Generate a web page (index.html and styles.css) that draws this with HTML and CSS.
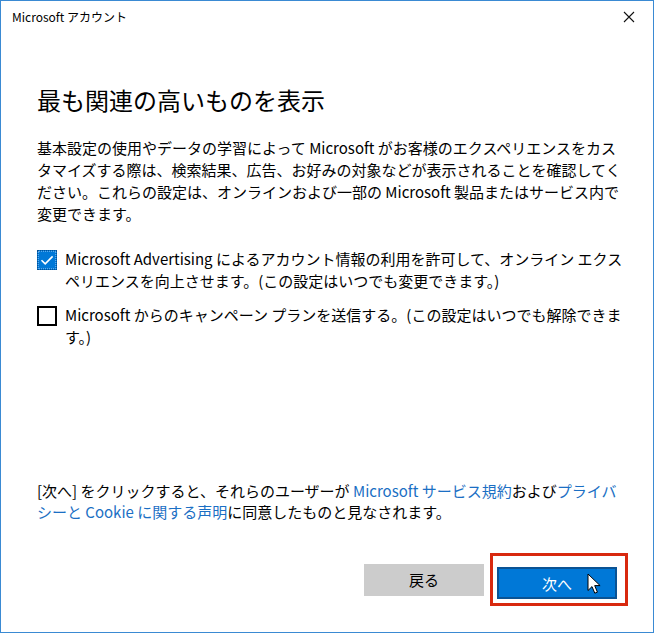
FILE: index.html
```html
<!DOCTYPE html>
<html lang="ja">
<head>
<meta charset="utf-8">
<link rel="stylesheet" href="styles.css">
</head>
<body>
<div class="window">
  <div class="titlebar">
    <span class="title">Microsoft アカウント</span>
    <svg class="close" width="12" height="12" viewBox="0 0 12 12"><path d="M1 1L11 11M11 1L1 11" stroke="#111" stroke-width="1.1" fill="none"/></svg>
  </div>
  <div class="content">
    <h1 class="heading">最も関連の高いものを表示</h1>
    <p class="intro">基本設定の使用やデータの学習によって Microsoft がお客様のエクスペリエンスをカス<br>タマイズする際は、検索結果、広告、お好みの対象などが表示されることを確認してく<br>ださい。これらの設定は、オンラインおよび一部の Microsoft 製品またはサービス内で<br>変更できます。</p>
    <div class="option">
      <span class="box checked"><svg width="20" height="20" viewBox="0 0 20 20"><path d="M4.5 10.2L8.2 13.8L15.6 6.4" stroke="#fff" stroke-width="1.6" fill="none"/></svg></span>
      <span class="label">Microsoft Advertising によるアカウント情報の利用を許可して、オンライン エクス<br>ペリエンスを向上させます。(この設定はいつでも変更できます。)</span>
    </div>
    <div class="option">
      <span class="box"></span>
      <span class="label">Microsoft からのキャンペーン プランを送信する。(この設定はいつでも解除できま<br>す。)</span>
    </div>
    <p class="legal">[次へ] をクリックすると、それらのユーザーが <a class="link">Microsoft サービス規約</a>および<a class="link">プライバ<br>シーと Cookie に関する声明</a>に同意したものと見なされます。</p>
    <div class="buttons">
      <button class="btn back">戻る</button>
      <div class="highlight">
        <button class="btn next">次へ</button>
        <svg class="cursor" width="14" height="22" viewBox="0 0 14 22"><path d="M1 1V17.5L5 13.6L7.8 20.2L10.4 19.1L7.7 12.6H13.1Z" fill="#fff" stroke="#000" stroke-width="1" stroke-linejoin="miter"/></svg>
      </div>
    </div>
  </div>
</div>
</body>
</html>
```
FILE: styles.css
```css
* { box-sizing: border-box; }
html, body { margin: 0; padding: 0; background: #fff; }
body { font-family: "Noto Sans CJK JP", "Noto Sans", sans-serif; color: #000; }
.window {
  width: 654px; height: 633px;
  border: 1px solid #3a8ad3;
  display: flex; flex-direction: column;
  background: #fff;
}
.titlebar {
  height: 32px; flex: none;
  display: flex; align-items: center; justify-content: space-between;
  padding: 0 18px 0 11px;
  font-size: 12px;
}
.title { line-height: 1; }
.close { display: block; }
.content {
  flex: 1; display: flex; flex-direction: column;
  padding: 0 30px 0 36px;
  position: relative;
}
.heading {
  margin: 51px 0 0; font-size: 24px; font-weight: normal; line-height: 32px;
  letter-spacing: 0;
}
.intro {
  margin: 21px 0 0; font-size: 15px; line-height: 22px; white-space: nowrap;
}
.option { display: flex; align-items: flex-start; margin-top: 13px; }
.option + .option { margin-top: 14px; }
.intro + .option { margin-top: 25px; }
.box {
  flex: none; width: 20px; height: 20px; margin-top: 0;
  border: 2px solid #000; display: block;
}
.box.checked {
  border: 1px dotted #0a4f8f; background: #0078d7;
  outline: 1px dotted #5fa8e6; outline-offset: -2px;
}
.box.checked svg { display: block; margin: -1px; }
.label {
  margin-left: 8px; font-size: 15px; line-height: 22px; white-space: nowrap;
  margin-top: -2px;
}
.legal {
  margin: auto 0 0; font-size: 15px; line-height: 21px; white-space: nowrap;
}
.link { color: #1b6fc4; text-decoration: none; }
.buttons {
  display: flex; justify-content: flex-end; align-items: center; gap: 6px;
  margin: 31px -5px 26px 0;
}
.btn {
  font-family: inherit; font-size: 15px; width: 120px; height: 32px;
  border: 0; padding: 0; color: #000; line-height: 1;
}
.back { background: #cccccc; }
.highlight {
  border: 3px solid #d8290f; padding: 11px 8px 4px 4px; position: relative;
}
.next { background: #0078d7; color: #fff; border: 2px solid #0a5394; display: block; }
.cursor { position: absolute; left: 94px; top: 17px; }
```
